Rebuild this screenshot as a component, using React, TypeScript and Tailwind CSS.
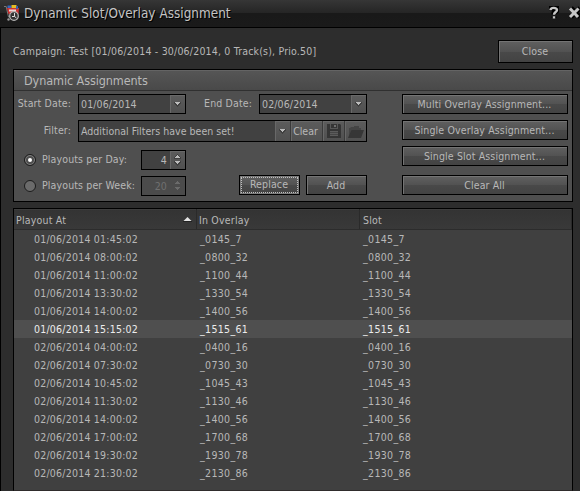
import React from "react";
import clsx from "clsx";

interface Assignment {
  playoutAt: string;
  name: string;
}

const assignments: Assignment[] = [
  { playoutAt: "01/06/2014 01:45:02", name: "_0145_7" },
  { playoutAt: "01/06/2014 08:00:02", name: "_0800_32" },
  { playoutAt: "01/06/2014 11:00:02", name: "_1100_44" },
  { playoutAt: "01/06/2014 13:30:02", name: "_1330_54" },
  { playoutAt: "01/06/2014 14:00:02", name: "_1400_56" },
  { playoutAt: "01/06/2014 15:15:02", name: "_1515_61" },
  { playoutAt: "02/06/2014 04:00:02", name: "_0400_16" },
  { playoutAt: "02/06/2014 07:30:02", name: "_0730_30" },
  { playoutAt: "02/06/2014 10:45:02", name: "_1045_43" },
  { playoutAt: "02/06/2014 11:30:02", name: "_1130_46" },
  { playoutAt: "02/06/2014 14:00:02", name: "_1400_56" },
  { playoutAt: "02/06/2014 17:00:02", name: "_1700_68" },
  { playoutAt: "02/06/2014 19:30:02", name: "_1930_78" },
  { playoutAt: "02/06/2014 21:30:02", name: "_2130_86" },
];

const SELECTED_ROW = 5;

const buttonFace =
  "bg-[linear-gradient(#606060,#525252_50%,#494949_50%,#434343)] shadow-[inset_1px_1px_0_#747474]";

const toolFace =
  "bg-[linear-gradient(#5c5c5c,#505050)] shadow-[inset_1px_1px_0_#686868]";

const Button: React.FC<{
  label: string;
  className?: string;
  focused?: boolean;
}> = ({ label, className, focused }) => (
  <button
    className={clsx(
      "flex shrink-0 items-center justify-center border border-black p-px",
      buttonFace,
      className
    )}
  >
    <span
      className={clsx(
        "flex h-full w-full items-center justify-center pr-px",
        focused
          ? "border border-dotted border-[#c0c0c0] outline outline-[#7c7c7c]"
          : "pt-px"
      )}
    >
      {label}
    </span>
  </button>
);

const Arrow: React.FC<{ up?: boolean; dim?: boolean }> = ({ up, dim }) => (
  <svg width="7" height="6" viewBox="0 0 7 6" shapeRendering="crispEdges">
    <path
      d={up ? "M3 0h1v1h1v1h1v1h1v2H0V3h1V2h1V1h1z" : "M0 1h7v2H6v1H5v1H4v1H3V5H2V4H1V3H0z"}
      fill={dim ? "#4b4b4b" : "#404040"}
    />
    <path
      d={up ? "M3 1h1v1h1v1h1v1H1V3h1V2h1z" : "M1 1h5v1H5v1H4v1H3V3H2V2H1z"}
      fill={dim ? "#6b6b6b" : "#bcbcbc"}
    />
  </svg>
);

const DateField: React.FC<{ value: string }> = ({ value }) => (
  <div className="flex h-5 w-[108px] shrink-0 border border-black bg-[#414141]">
    <span className="flex-1 pl-[2px] leading-[19px]">{value}</span>
    <span className={clsx("flex w-[15px] items-center justify-center", toolFace)}>
      <Arrow />
    </span>
  </div>
);

const Spinner: React.FC<{ value: number; disabled?: boolean }> = ({
  value,
  disabled,
}) => (
  <div
    className={clsx(
      "flex h-5 w-[45px] shrink-0 border border-black",
      disabled ? "bg-[#4b4b4b] text-[#707070]" : "bg-[#414141]"
    )}
  >
    <span className="flex-1 pr-[3px] text-right leading-[19px]">{value}</span>
    <span
      className={clsx(
        "flex w-[15px] flex-col items-center justify-between py-[3px]",
        !disabled && toolFace
      )}
    >
      <Arrow up dim={disabled} />
      <Arrow dim={disabled} />
    </span>
  </div>
);

const Radio: React.FC<{ checked?: boolean }> = ({ checked }) => (
  <span
    className={clsx(
      "flex size-3 shrink-0 items-center justify-center rounded-full border border-[#1c1c1c]",
      checked ? "bg-[#4e4e4e] shadow-[inset_0_0_0_1px_#858585]" : "bg-[#6b6b6b]"
    )}
  >
    {checked && <span className="size-1 rounded-full bg-white" />}
  </span>
);

const CartIcon: React.FC = () => (
  <svg width="16" height="17" viewBox="0 0 16 17">
    <path d="M0 1.500h2.200L4.500 12h3" stroke="#777" fill="none" />
    <path d="M3 3h12l-.5 6H4.500z" fill="#cf3232" />
    <path d="M3.500 .5h4V3h-4z" fill="#3767bd" />
    <path d="M7.500 0h5v3h-5z" fill="#e5bd24" />
    <path d="M12 1h2v3h-2z" fill="#3b62b0" />
    <path d="M5 4.500h7v2H5z" fill="#eed5d5" />
    <circle cx="10" cy="11" r="4.300" fill="#343434" stroke="#b5b5b5" strokeWidth="1.300" />
    <path d="M10.500 8v3.500H8M10.500 11.500l2 1.500" stroke="#ddd" fill="none" />
    <circle cx="4.500" cy="14.500" r="1.200" fill="#999" />
  </svg>
);

const TitleBar: React.FC = () => (
  <div className="flex h-7 shrink-0 items-start border-b border-black bg-[linear-gradient(#363636,#242424_50%,#191919_50%,#1a1a1a)] pl-1 pt-[5px]">
    <CartIcon />
    <h1 className="ml-1 flex-1 whitespace-nowrap text-[13.4px] leading-[17px] tracking-[0.03px] text-[#c4c4c4] [text-shadow:1px_1px_0_#000]">
      Dynamic Slot/Overlay Assignment
    </h1>
    <svg width="31" height="15" viewBox="0 0 31 15" className="shrink-0">
      <g stroke="#000" strokeWidth="5" fill="none">
        <path d="M2.500 6V3.500H7.500V6L5 8V9.500M5 11.500V13" />
        <path d="M22 3l9 9M31 3l-9 9" />
      </g>
      <g stroke="#c6c6c6" strokeWidth="2.400" fill="none">
        <path d="M1.500 5.200C1.500 2.200 8 2.200 8 5C8 7.200 5 7 5 9.800M5 11.200V13.600" />
        <path d="M21 3.500l8 8.500M29.500 3.500l-8.500 8.500" strokeWidth="3" />
      </g>
    </svg>
  </div>
);

const FilterField: React.FC = () => (
  <div className="flex h-[22px] w-[289px] border border-black bg-[#414141]">
    <span className="flex-1 whitespace-nowrap pl-[2px] leading-[21px] tracking-[0.03px]">
      Additional Filters have been set!
    </span>
    <span className={clsx("flex w-[15px] items-center justify-center", toolFace)}>
      <Arrow />
    </span>
    <button
      className={clsx(
        "w-8 border-l border-[#3a3a3a] pr-0.5 pt-0.5 tracking-normal",
        toolFace
      )}
    >
      Clear
    </button>
    <span
      className={clsx(
        "flex w-[22px] items-center justify-center border-l border-[#3a3a3a]",
        toolFace
      )}
    >
      <svg width="14" height="14" viewBox="0 0 14 14">
        <path d="M0 0h3v5h8V0h2l1 1v13H0z" fill="#353535" />
        <path d="M4 0h6v4H4z" fill="#353535" />
        <path d="M7 1h2v2H7z" fill="#707070" />
        <path d="M3 7h8v5H3z" fill="#5c5c5c" />
        <path d="M3 8.500h8M3 10.500h8" stroke="#464646" />
      </svg>
    </span>
    <span
      className={clsx(
        "flex w-[22px] items-center justify-center border-l border-[#3a3a3a]",
        toolFace
      )}
    >
      <svg width="16" height="13" viewBox="0 0 16 13">
        <path d="M1 12V3h1l1-1h3V1h5v2h2v3z" fill="#444" />
        <path d="M3.500 5H16l-3 8H0z" fill="#363636" />
      </svg>
    </span>
  </div>
);

const AssignmentPanel: React.FC = () => (
  <section className="mt-1.5 h-[133px] shrink-0 border border-black bg-[#4f4f4f]">
    <h2 className="h-[21px] border-b border-[#303030] bg-[linear-gradient(#565656,#494949)] pl-2.5 text-[12.5px] leading-[21px] tracking-[-0.08px] shadow-[inset_0_1px_0_#646464]">
      Dynamic Assignments
    </h2>
    <div className="flex justify-between pr-1 pt-[3px]">
      <div className="w-[353px]">
        <div className="flex">
          <label className="w-[64px] pr-[7px] text-right leading-[19px]">
            Start&nbsp;Date:
          </label>
          <DateField value="01/06/2014" />
          <label className="flex-1 pr-[7px] text-right leading-[19px]">End Date:</label>
          <DateField value="02/06/2014" />
        </div>
        <div className="mt-1.5 flex">
          <label className="w-[64px] pr-[7px] text-right leading-5">Filter:</label>
          <FilterField />
        </div>
        <div className="mt-2 flex items-center pl-2.5">
          <Radio checked />
          <label className="w-[105px] pl-[6px]">Playouts per Day:</label>
          <Spinner value={4} />
        </div>
        <div className="mt-[5px] flex">
          <div className="mt-px flex items-center pl-2.5">
            <Radio />
            <label className="w-[105px] whitespace-nowrap pl-[6px]">
              Playouts per Week:
            </label>
            <Spinner value={20} disabled />
          </div>
          <div className="ml-auto flex gap-1.5">
            <Button label="Replace" className="h-5 w-[61px]" focused />
            <Button label="Add" className="h-5 w-[61px]" />
          </div>
        </div>
      </div>
      <div className="flex w-[166px] flex-col">
        <Button label="Multi Overlay Assignment..." className="h-5" />
        <Button label="Single Overlay Assignment..." className="mt-1.5 h-5" />
        <Button label="Single Slot Assignment..." className="mt-1.5 h-5" />
        <Button label="Clear All" className="mt-[9px] h-5" />
      </div>
    </div>
  </section>
);

const AssignmentTable: React.FC = () => (
  <section className="mt-1.5 flex-1 border border-[#2f2c2c] border-x-black border-t-black bg-[#404040]">
    <div className="flex h-[21px] border-b border-[#2c2c2c] bg-[linear-gradient(#333,#393939)] leading-[22px] tracking-[0.2px] shadow-[inset_0_1px_0_#3e3e3e]">
      <div className="flex w-[183px] justify-between border-r border-[#2a2a2a] pl-[2px] pr-1 pt-px leading-5">
        Playout At
        <svg width="9" height="6" viewBox="0 0 9 6" className="mt-1.5">
          <path d="M0 5h9v1H0z" fill="#222" />
          <path d="M4.500 1L8.500 5H.5z" fill="#e4e4e4" />
        </svg>
      </div>
      <div className="w-[163px] border-r border-[#2a2a2a] pl-[2px]">In Overlay</div>
      <div className="flex-1 border-r border-[#2a2a2a] pl-[3px]">Slot</div>
    </div>
    {assignments.map((row, i) => (
      <div
        key={row.playoutAt}
        className={clsx(
          "flex h-[18px] leading-[19px] tracking-[0.22px]",
          i === SELECTED_ROW && "bg-[#4f4f4f] text-[#ececec]"
        )}
      >
        <span className="w-[186px] pl-5">{row.playoutAt}</span>
        <span className="w-[163px] tracking-[0.34px]">{row.name}</span>
        <span className="tracking-[0.34px]">{row.name}</span>
      </div>
    ))}
  </section>
);

const App: React.FC = () => (
  <div className="flex h-[491px] w-[580px] flex-col overflow-hidden bg-[#2d2d2d] font-['DejaVu_Sans_Condensed','DejaVu_Sans',sans-serif] text-[10.5px] tracking-[0.13px] text-[#b8b8b8] [font-stretch:condensed]">
    <TitleBar />
    <main className="flex flex-1 flex-col border-l border-black pl-3 pr-[7px] pt-3">
      <div className="flex h-[23px] items-center justify-between">
        <span className="whitespace-nowrap pt-px tracking-[0.19px]">
          Campaign: Test [01/06/2014 - 30/06/2014, 0 Track(s), Prio.50]
        </span>
        <Button label="Close" className="h-[23px] w-[75px]" />
      </div>
      <AssignmentPanel />
      <AssignmentTable />
    </main>
  </div>
);

export default App;
